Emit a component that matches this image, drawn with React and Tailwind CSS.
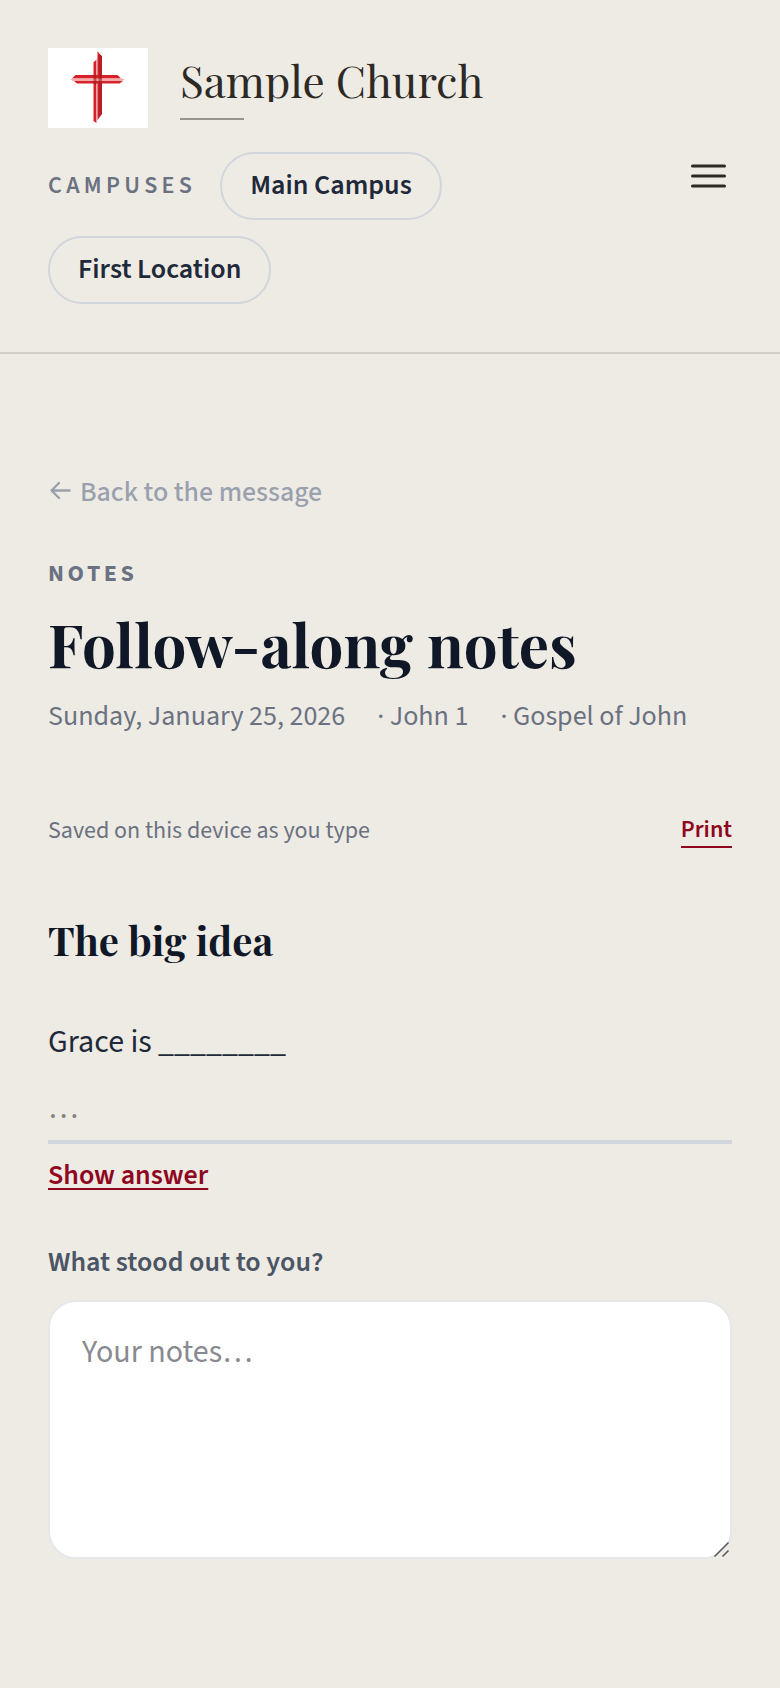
import React, { useState } from 'react';

const campuses = ['Main Campus', 'First Location'];

const CrossLogo = () => (
  <svg viewBox="0 0 100 80" className="h-20 w-[100px] shrink-0 bg-white" aria-hidden="true">
    <path d="M45.500 14.500L48.500 11.500V75L45.500 73Z" fill="#d8202a" />
    <path d="M48.500 12V75L49.500 72V8Z" fill="#f6b5b3" />
    <path d="M49.500 3.500L51 5V70L49.500 72Z" fill="#cf2029" />
    <path d="M51 5.500V70L54 66V8Z" fill="#b81c24" />
    <path d="M24 30.500L27.500 27H69.500L73 30.500Z" fill="#d8202a" />
    <path d="M22.500 31.500L25 30.500H74L76.500 31.500L74 33H25Z" fill="#f4aaa8" />
    <path d="M26 33H75L71.500 35.500H29Z" fill="#d3242c" />
    <path d="M45.500 27H48.500V36H45.500ZM50.500 27H54V36H50.500Z" fill="#9e171d" fillOpacity="0.6" />
  </svg>
);

const Header = () => {
  const [menuOpen, setMenuOpen] = useState(false);

  return (
    <header className="flex items-center justify-between gap-8 border-b-2 border-[#d0cec8] p-12">
      <div className="flex flex-1 flex-wrap items-center gap-x-8 gap-y-6">
        <a href="#home" className="flex items-center gap-8">
          <CrossLogo />
          <span className="block pt-0.5">
            <span className="block overflow-hidden font-['Playfair_Display','Liberation_Serif',serif] text-[44px] leading-11 text-[#2d2a26]">
              Sample Church
            </span>
            <span className="mt-4 block h-0.5 w-16 bg-[#96948f]" />
          </span>
        </a>
        <nav aria-label="Campuses" className="flex max-w-[480px] flex-wrap items-center gap-x-6 gap-y-4">
          <span className="text-[24px] leading-8 font-semibold tracking-[0.18em] text-gray-500">CAMPUSES</span>
          {campuses.map((campus) => (
            <a
              key={campus}
              href="#campus"
              className="rounded-full border-2 border-gray-300 px-7 pt-[15px] pb-[17px] text-[28px] leading-8 font-semibold text-gray-800"
            >
              {campus}
            </a>
          ))}
        </nav>
      </div>
      <button
        type="button"
        aria-label="Menu"
        aria-expanded={menuOpen}
        onClick={() => setMenuOpen(!menuOpen)}
        className="flex size-12 items-center justify-center text-[#2d2a26]"
      >
        <svg viewBox="0 0 48 48" className="size-12" fill="none" stroke="currentColor" strokeWidth="3" strokeLinecap="round">
          <path d="M8.500 14H40.500M8.500 24H40.500M8.500 34H40.500" />
        </svg>
      </button>
    </header>
  );
};

const App = () => {
  const [blank, setBlank] = useState('');
  const [notes, setNotes] = useState('');

  return (
    <div className="min-h-screen bg-[#eeebe4] font-['Source_Sans_3','Noto_Sans_CJK_SC',sans-serif]">
      <Header />

      <main className="px-12 pt-[120px] pb-32">
        <a href="#message" className="flex items-center gap-2 text-[28px] leading-9 font-medium text-gray-400">
          <svg viewBox="0 0 24 24" className="size-6" fill="none" stroke="currentColor" strokeWidth="2.4" strokeLinecap="round" strokeLinejoin="round" aria-hidden="true">
            <path d="M21.500 10.500H4M11 3L3.500 10.500L11 18" />
          </svg>
          Back to the message
        </a>

        <p className="mt-12 text-[24px] leading-8 font-bold tracking-[0.15em] text-gray-500">NOTES</p>
        <h1 className="mt-4 font-['Playfair_Display','Liberation_Serif',serif] text-[60px] leading-[74px] font-bold text-gray-900">
          Follow-along notes
        </h1>
        <p className="mt-4 flex flex-wrap gap-x-8 text-[28px] leading-10 text-gray-500">
          <span>Sunday, January 25, 2026</span>
          <span>· John 1</span>
          <span>· Gospel of John</span>
        </p>

        <div className="mt-[78px] flex items-center justify-between text-[24px] leading-8">
          <span className="text-gray-500">Saved on this device as you type</span>
          <button
            type="button"
            onClick={() => window.print()}
            className="border-b-2 border-[#8f0620] font-semibold text-[#8f0620]"
          >
            Print
          </button>
        </div>

        <h2 className="mt-16 font-['Playfair_Display','Liberation_Serif',serif] text-[40px] leading-14 font-bold text-gray-900">
          The big idea
        </h2>

        <label htmlFor="blank" className="mt-12 block text-[32px] leading-13 text-gray-800">
          Grace is ________
        </label>
        <input
          id="blank"
          type="text"
          value={blank}
          onChange={(e) => setBlank(e.target.value)}
          placeholder="…"
          className="mt-3 block h-16 w-full border-b-4 border-gray-300 bg-transparent pb-1 text-[32px] text-gray-900 outline-none placeholder:text-[#85837f]"
        />
        <button
          type="button"
          className="mt-3 block text-[28px] leading-[38px] font-semibold text-[#8f0620] underline decoration-2 underline-offset-4"
        >
          Show answer
        </button>

        <label htmlFor="notes" className="mt-12 block text-[28px] leading-10 font-semibold text-gray-600">
          What stood out to you?
        </label>
        <div className="relative mt-[18px]">
          <textarea
            id="notes"
            rows={4}
            value={notes}
            onChange={(e) => setNotes(e.target.value)}
            placeholder="Your notes…"
            className="block h-[259px] w-full resize-none rounded-[28px] border-2 border-gray-200 bg-white px-8 py-6 text-[32px] leading-13 text-gray-900 outline-none placeholder:text-[#888a90]"
          />
          <svg viewBox="0 0 16 16" className="pointer-events-none absolute right-0.5 bottom-0.5 size-4" stroke="#555" strokeWidth="1.500" aria-hidden="true">
            <path d="M0.500 15.500L14.500 1.500M8.500 15.500L14.500 9.500" />
          </svg>
        </div>
      </main>
    </div>
  );
};

export default App;
